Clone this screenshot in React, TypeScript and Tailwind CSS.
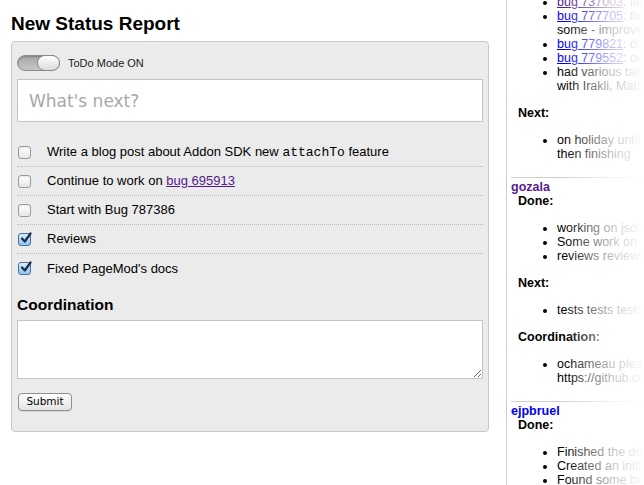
import React from "react";

function Check({ checked }: { checked?: boolean }) {
  if (checked) {
    return (
      <span className="relative ml-[1px] flex h-[13px] w-[13px] shrink-0 items-center justify-center rounded-[3px] border border-[#4f6e94] bg-gradient-to-b from-[#d9efff] to-[#8cc4f2]">
        <svg width="12" height="12" viewBox="0 0 12 12" className="absolute left-[1px] top-[-2px]">
          <path d="M2 6.5 L4.8 9.5 L10.5 1.5" fill="none" stroke="#1b2a4a" strokeWidth="2.2" strokeLinecap="round" strokeLinejoin="round" />
        </svg>
      </span>
    );
  }
  return (
    <span className="ml-[1px] h-[13px] w-[13px] shrink-0 rounded-[3px] border border-[#9a9a9a] bg-gradient-to-b from-white to-[#e6e6e6] shadow-[inset_0_1px_1px_rgba(0,0,0,0.08)]" />
  );
}

function Row({ checked, children, last }: { checked?: boolean; children: React.ReactNode; last?: boolean }) {
  return (
    <div className={"flex h-[29px] items-center " + (last ? "" : "border-b border-dotted border-[#b8b8b8]")}>
      <Check checked={checked} />
      <div className="ml-[16px] text-[13px] leading-[16px] text-black">{children}</div>
    </div>
  );
}

function Bullets({ items }: { items: React.ReactNode[] }) {
  return (
    <ul className="my-[13px] list-disc pl-[50px]">
      {items.map((it, i) => (
        <li key={i} className="whitespace-nowrap">
          {it}
        </li>
      ))}
    </ul>
  );
}

function Label({ children }: { children: React.ReactNode }) {
  return <div className="pl-[11px] font-bold">{children}</div>;
}

function Sep() {
  return (
    <div className="pb-[2px] pl-[4px] pt-[3px]">
      <div className="h-px bg-[#d0d0d0]" />
    </div>
  );
}

export default function App() {
  const sans = { fontFamily: '"Liberation Sans", Arial, Helvetica, sans-serif' };
  return (
    <div className="flex h-[485px] w-[644px] overflow-hidden bg-white" style={sans}>
      <div className="w-[506px] shrink-0 pl-[11px] pr-[17px]">
        <h1 className="mt-[12px] h-[24px] text-[19px] font-bold leading-[24px] text-black">New Status Report</h1>
        <div className="mt-[5px] rounded-[4px] border border-[#c8c8c8] bg-[#ebebeb] px-[5px] pb-[20px] pt-[13px]">
          <div className="flex h-[16px] items-center">
            <div className="relative h-[16px] w-[43px] rounded-full border border-[#8e8e8e] bg-gradient-to-b from-[#a8a8a8] to-[#c6c6c6] shadow-[inset_0_1px_2px_rgba(0,0,0,0.25)]">
              <div className="absolute right-[-1px] top-[-1px] h-[16px] w-[23px] rounded-full border border-[#8a8a8a] bg-gradient-to-b from-white to-[#dcdcdc]" />
            </div>
            <span className="ml-[8px] text-[11px] text-[#222]">ToDo Mode ON</span>
          </div>
          <input
            className="mt-[8px] block h-[43px] w-full border border-[#c4c4c4] bg-white px-[11px] text-[17px] text-black outline-none placeholder:text-[#a8a8a8]"
            style={{ fontFamily: '"DejaVu Sans", Verdana, sans-serif' }}
            placeholder="What's next?"
          />
          <div className="mt-[16px]">
            <Row>
              Write a blog post about Addon SDK new{" "}
              <code className="text-[13px]" style={{ fontFamily: '"Liberation Mono", "Courier New", monospace' }}>
                attachTo
              </code>{" "}
              feature
            </Row>
            <Row>
              Continue to work on{" "}
              <a href="#" className="text-[#551a8b] underline">
                bug 695913
              </a>
            </Row>
            <Row>Start with Bug 787386</Row>
            <Row checked>Reviews</Row>
            <Row checked last>
              Fixed PageMod's docs
            </Row>
          </div>
          <h3 className="mt-[12px] h-[20px] text-[15.5px] font-bold leading-[20px] text-black">Coordination</h3>
          <textarea className="mt-[5px] block h-[59px] w-full resize border border-[#c4c4c4] bg-white outline-none" />
          <button
            className="ml-[1px] mt-[14px] flex h-[18px] w-[54px] items-center justify-center rounded-[4px] border border-[#8f8f8f] bg-gradient-to-b from-white to-[#e4e4e4] text-[10.5px] text-black shadow-[0_1px_0_rgba(0,0,0,0.08)]"
            style={{ fontFamily: '"DejaVu Sans", Verdana, sans-serif' }}
          >
            Submit
          </button>
        </div>
      </div>
      <div className="relative h-[485px] flex-1 overflow-hidden border-l border-[#cfcfcf] text-[12.5px] leading-[14px] text-black">
        <div className="-mt-[18px]">
          <Bullets
            items={[
              <>
                <a href="#" className="text-[#551a8b] underline">bug 737003</a>: landed
              </>,
              <>
                <a href="#" className="text-[#0000ee] underline">bug 777705</a>: fixed
                <br />
                some - improvements
              </>,
              <>
                <a href="#" className="text-[#0000ee] underline">bug 779821</a>: done
              </>,
              <>
                <a href="#" className="text-[#0000ee] underline">bug 779552</a>: done
              </>,
              <>
                had various talks
                <br />
                with Irakli, Matteo
              </>,
            ]}
          />
          <Label>Next:</Label>
          <Bullets
            items={[
              <>
                on holiday until
                <br />
                then finishing
              </>,
            ]}
          />
          <Sep />
          <div className="pl-[4px] font-bold text-[#551a8b]">gozala</div>
          <Label>Done:</Label>
          <Bullets items={["working on jsdocs", "Some work on", "reviews reviews"]} />
          <Label>Next:</Label>
          <Bullets items={["tests tests tests"]} />
          <Label>Coordination:</Label>
          <Bullets
            items={[
              <>
                ochameau please
                <br />
                https://github.com
              </>,
            ]}
          />
          <Sep />
          <div className="pl-[4px] font-bold text-[#0000ee]">ejpbruel</div>
          <Label>Done:</Label>
          <Bullets items={["Finished the docs", "Created an initial", "Found some bugs"]} />
        </div>
        <div className="pointer-events-none absolute bottom-0 right-0 top-0 w-[80px] bg-gradient-to-r from-[rgba(255,255,255,0)] via-[rgba(255,255,255,0.75)] via-60% to-white" />
      </div>
    </div>
  );
}
